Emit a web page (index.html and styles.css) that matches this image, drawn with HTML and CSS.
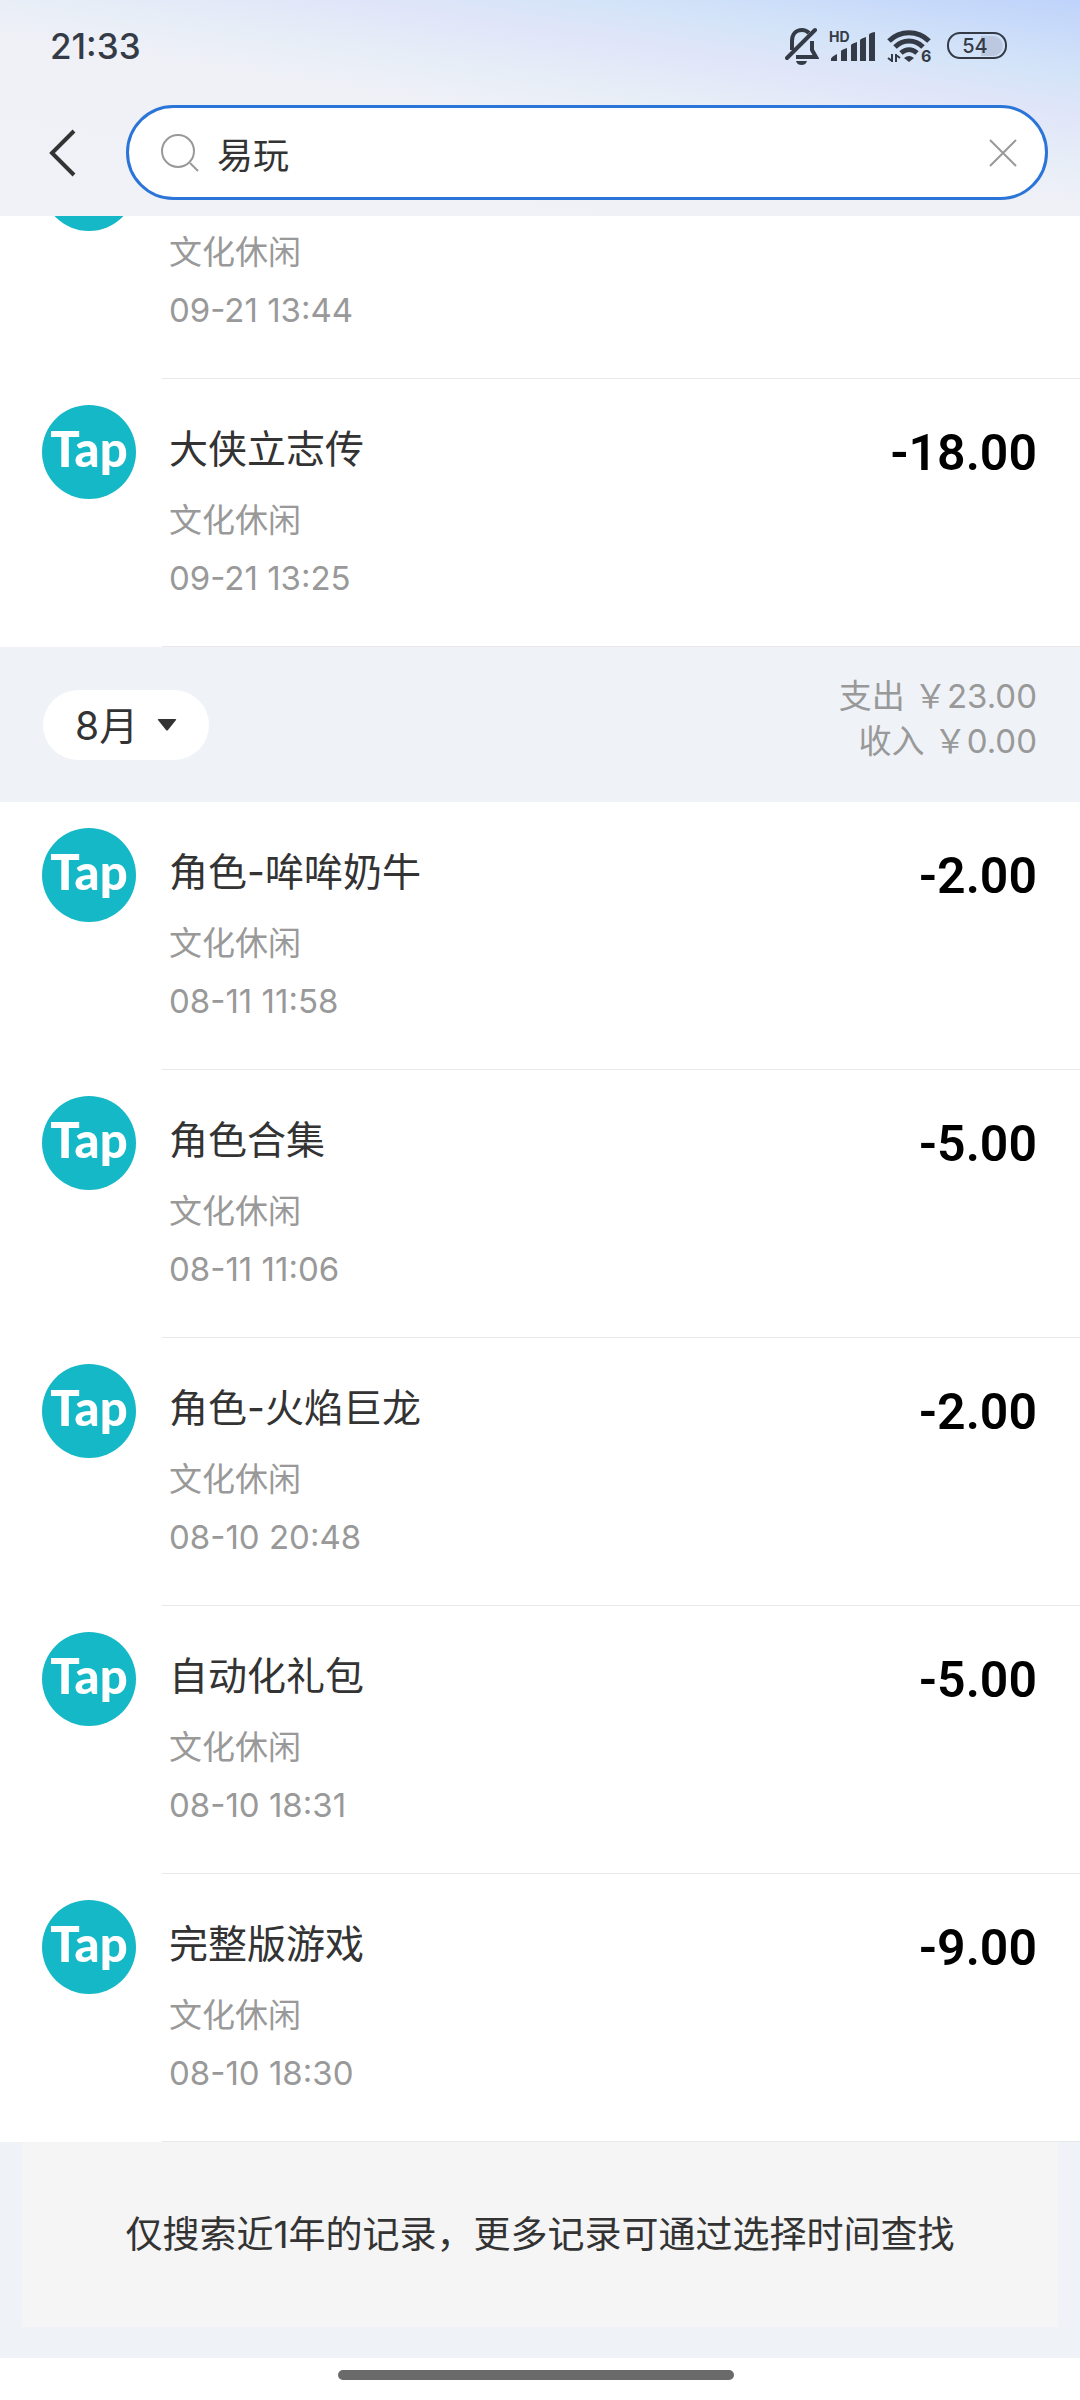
FILE: index.html
```html
<!DOCTYPE html>
<html lang="zh-CN">
<head>
  <meta charset="UTF-8">
  <meta name="viewport" content="width=device-width, initial-scale=1">
  <title>易玩</title>
  <link rel="stylesheet" href="styles.css">
</head>
<body>

  <header class="top">
    <div class="status">
      <span class="clock">21:33</span>
      <div class="status-icons">
        <!-- silent -->
        <svg width="34" height="38" viewBox="0 0 34 38" fill="none" stroke="#343b46" stroke-width="4">
          <path d="M7 23V14C7 7 11 3 17 3c3 0 5 1 7 3M27 14v9l4 7H11"/>
          <path d="M2 31L30 3" stroke-linecap="round"/>
          <path d="M11 34h11c-1 3-3 4-5.500 4S12 37 11 34z" fill="#343b46" stroke="none"/>
        </svg>
        <!-- signal -->
        <svg width="48" height="34" viewBox="0 0 48 34" fill="#343b46">
          <text x="0" y="13" class="hd">HD</text>
          <path d="M2 32v-2q0-2 6-5v7zM12 32V22q0-1 6-3v13zM22 32V16q0-1 6-3v19zM31 32V11q0-1 6-3v24zM40 32V6q0-2 6-3v29z"/>
        </svg>
        <!-- wifi -->
        <svg width="46" height="38" viewBox="0 0 46 38" fill="none" stroke="#343b46" stroke-width="5">
          <path d="M2 14C13 3 31 3 42 14M8 20c8-8 20-8 28 0M14 26c5-4.500 11-4.500 16 0"/>
          <path d="M17 31q5-4 10 0l-5 4z" fill="#343b46" stroke="none"/>
          <path d="M5 27v8M1 31l4 3M9 35v-8M9 28l4 3" stroke-width="2"/>
          <text x="34" y="35" class="six" fill="#343b46" stroke="none">6</text>
        </svg>
        <!-- battery -->
        <svg class="battery" width="60" height="28" viewBox="0 0 60 28">
          <path d="M34 4h12a10 10 0 0 1 0 20H34z" fill="#bcc8df"/>
          <rect x="1" y="1" width="58" height="25" rx="12" fill="none" stroke="#343b46" stroke-width="2"/>
          <text x="28" y="21" class="level">54</text>
        </svg>
      </div>
    </div>

    <form class="search-row">
      <button type="button" class="back" aria-label="返回">
        <svg width="30" height="48" viewBox="0 0 30 48" fill="none" stroke="#333" stroke-width="4">
          <path d="M26 2L4 24l22 22"/>
        </svg>
      </button>
      <div class="search">
        <svg width="38" height="38" viewBox="0 0 38 38" fill="none" stroke="#999" stroke-width="2">
          <circle cx="17" cy="17" r="16"/>
          <path d="M29 29l8 8"/>
        </svg>
        <input type="text" value="易玩" aria-label="搜索">
        <button type="button" class="clear" aria-label="清除">
          <svg width="28" height="28" viewBox="0 0 28 28" fill="none" stroke="#999" stroke-width="2">
            <path d="M1 1l26 26M27 1L1 27"/>
          </svg>
        </button>
      </div>
    </form>
  </header>

  <main>
    <ul class="records scrolled">
      <li class="record">
        <div class="logo">Tap</div>
        <div class="body">
          <div class="info">
            <p class="name"></p>
            <p class="type">文化休闲</p>
            <p class="time">09-21 13:44</p>
          </div>
        </div>
      </li>
      <li class="record">
        <div class="logo">Tap</div>
        <div class="body">
          <div class="info">
            <p class="name">大侠立志传</p>
            <p class="type">文化休闲</p>
            <p class="time">09-21 13:25</p>
          </div>
          <span class="amount">-18.00</span>
        </div>
      </li>
    </ul>

    <section class="month">
      <div class="picker">
        <select aria-label="月份">
          <option>8月</option>
        </select>
        <svg width="20" height="12" viewBox="0 0 20 12"><path d="M2 0h16q2 0 1 1l-8 10q-1 1-2 0L1 1Q0 0 2 0z" fill="#333"/></svg>
      </div>
      <div class="totals">
        <p>支出 ￥23.00</p>
        <p>收入 ￥0.00</p>
      </div>
    </section>

    <ul class="records">
      <li class="record">
        <div class="logo">Tap</div>
        <div class="body">
          <div class="info">
            <p class="name">角色-哞哞奶牛</p>
            <p class="type">文化休闲</p>
            <p class="time">08-11 11:58</p>
          </div>
          <span class="amount">-2.00</span>
        </div>
      </li>
      <li class="record">
        <div class="logo">Tap</div>
        <div class="body">
          <div class="info">
            <p class="name">角色合集</p>
            <p class="type">文化休闲</p>
            <p class="time">08-11 11:06</p>
          </div>
          <span class="amount">-5.00</span>
        </div>
      </li>
      <li class="record">
        <div class="logo">Tap</div>
        <div class="body">
          <div class="info">
            <p class="name">角色-火焰巨龙</p>
            <p class="type">文化休闲</p>
            <p class="time">08-10 20:48</p>
          </div>
          <span class="amount">-2.00</span>
        </div>
      </li>
      <li class="record">
        <div class="logo">Tap</div>
        <div class="body">
          <div class="info">
            <p class="name">自动化礼包</p>
            <p class="type">文化休闲</p>
            <p class="time">08-10 18:31</p>
          </div>
          <span class="amount">-5.00</span>
        </div>
      </li>
      <li class="record">
        <div class="logo">Tap</div>
        <div class="body">
          <div class="info">
            <p class="name">完整版游戏</p>
            <p class="type">文化休闲</p>
            <p class="time">08-10 18:30</p>
          </div>
          <span class="amount">-9.00</span>
        </div>
      </li>
    </ul>

    <div class="tip">
      <p>仅搜索近1年的记录，更多记录可通过选择时间查找</p>
    </div>
  </main>

  <footer class="home-bar"><span></span></footer>

</body>
</html>
```

FILE: styles.css
```css
* {
  box-sizing: border-box;
}

body {
  margin: 0;
  background-color: #fff;
  color: #333;
  font-family: Inter, "Noto Sans CJK SC", sans-serif;
  font-size: 36px;
}

p, ul {
  margin: 0;
  padding: 0;
}

button {
  display: flex;
  padding: 0;
  border: none;
  background: none;
  cursor: pointer;
}

/* Cabecera */
.top {
  position: relative;
  z-index: 1;
  padding-bottom: 16px;
  background: linear-gradient(189deg, #bfd3fb 0%, #d4e4f8 20%, #e0e5f9 30%, #e6edf7 41%, #f0f1f7 54%, #f0f2f7 100%);
}

.status {
  display: flex;
  justify-content: space-between;
  align-items: center;
  height: 92px;
  padding: 0 73px 0 50px;
}

.clock {
  color: #343b46;
  font-size: 35px;
  font-weight: 500;
}

.status-icons {
  display: flex;
  align-items: center;
  gap: 10px;
}

.battery {
  margin-left: 4px;
}

.hd {
  font-size: 14px;
  font-weight: 700;
}

.six {
  font-size: 16px;
  font-weight: 700;
}

.level {
  fill: #343b46;
  font-size: 20px;
  font-weight: 500;
  text-anchor: middle;
}

.search-row {
  display: flex;
  align-items: center;
  margin: 13px 32px 0 48px;
  gap: 48px;
}

.search {
  flex: 1;
  display: flex;
  align-items: center;
  height: 95px;
  padding: 0 28px 0 32px;
  border: 3px solid #2b74d8;
  border-radius: 48px;
  background-color: #fff;
}

.search input {
  flex: 1;
  min-width: 0;
  padding: 0 18px;
  border: none;
  outline: none;
  background: none;
  color: #333;
  font: inherit;
}

/* Lista */
.records {
  list-style: none;
}

/* la primera fila queda medio tapada por la cabecera */
.scrolled {
  margin-top: -105px;
}

.record {
  display: flex;
  gap: 26px;
  padding-left: 42px;
}

.logo {
  flex: none;
  width: 94px;
  height: 94px;
  margin-top: 26px;
  border-radius: 50%;
  background-color: #15b8c6;
  color: #fff;
  font-family: Lato, sans-serif;
  font-size: 49px;
  font-weight: 900;
  line-height: 86px;
  text-align: center;
}

.body {
  flex: 1;
  display: flex;
  justify-content: space-between;
  padding: 40px 43px 38px 7px;
  border-bottom: 1px solid #e9e9e9;
}

.name {
  height: 72px;
  font-size: 39px;
  line-height: 60px;
}

.type, .time {
  color: #999;
  font-size: 33px;
  line-height: 58px;
}

.time {
  line-height: 59px;
}

.amount {
  color: #000;
  font-family: Roboto, sans-serif;
  font-size: 50px;
  font-weight: 600;
  line-height: 68px;
}

/* Mes */
.month {
  display: flex;
  justify-content: space-between;
  align-items: center;
  padding: 27px 43px 26px;
  background-color: #eff2f7;
}

.picker {
  display: flex;
  align-items: center;
  position: relative;
}

.picker select {
  width: 166px;
  height: 70px;
  padding: 0 32px;
  appearance: none;
  border: none;
  border-radius: 35px;
  background-color: #fff;
  color: #333;
  font: inherit;
  font-size: 39px;
}

.picker svg {
  position: absolute;
  right: 32px;
  pointer-events: none;
}

.totals {
  padding-bottom: 12px;
  color: #999;
  font-size: 33px;
  line-height: 45px;
  text-align: right;
}

.tip {
  padding: 0 22px 31px;
  background-color: #eff2f7;
}

.tip p {
  background-color: #f5f5f5;
  font-size: 37px;
  line-height: 185px;
  text-align: center;
}

.home-bar {
  display: flex;
  justify-content: center;
  padding: 12px 8px 20px 0;
}

.home-bar span {
  width: 37%;
  height: 10px;
  border-radius: 5px;
  background-color: #6a6a6a;
}
```
